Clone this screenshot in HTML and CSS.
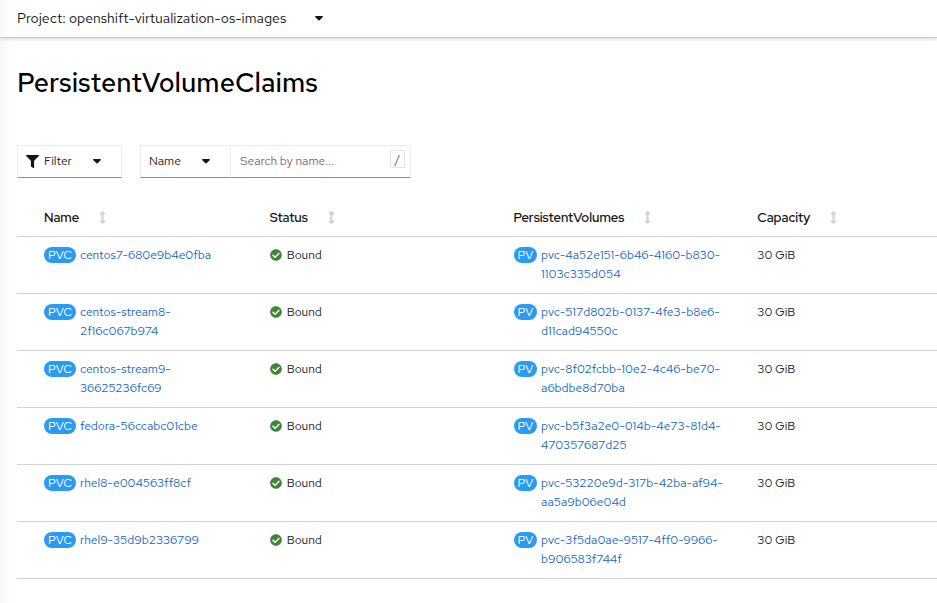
FILE: index.html
```
<!DOCTYPE html>
<html lang="en">
<head>
<meta charset="utf-8">
<title>PersistentVolumeClaims</title>
<link rel="stylesheet" href="styles.css">
</head>
<body>
<svg class="sprite" aria-hidden="true">
  <symbol id="caret" viewBox="0 0 10 6"><path d="M1.2 0h7.6c.8 0 1.1.9.6 1.4L5.7 5.2a1 1 0 0 1-1.4 0L.6 1.4C.1.9.4 0 1.2 0z"/></symbol>
  <symbol id="funnel" viewBox="0 0 512 512"><path d="M487.976 0H24.028C2.71 0-8.047 25.866 7.058 40.971L192 225.941V432c0 7.831 3.821 15.17 10.237 19.662l80 55.98C298.02 518.69 320 507.493 320 487.98V225.941l184.947-184.97C520.021 25.896 509.338 0 487.976 0z"/></symbol>
  <symbol id="sort" viewBox="0 0 256 512"><path d="M214.059 377.941H168V134.059h46.059c21.382 0 32.09-25.851 16.971-40.971L144.971 7.029c-9.373-9.373-24.568-9.373-33.941 0L24.971 93.088c-15.119 15.119-4.411 40.971 16.971 40.971H88v243.882H41.941c-21.382 0-32.09 25.851-16.971 40.971l86.059 86.059c9.373 9.373 24.568 9.373 33.941 0l86.059-86.059c15.12-15.119 4.412-40.971-16.97-40.971z"/></symbol>
  <symbol id="check" viewBox="0 0 512 512"><path d="M504 256c0 136.967-111.033 248-248 248S8 392.967 8 256 119.033 8 256 8s248 111.033 248 248zM227.314 387.314l184-184c6.248-6.248 6.248-16.379 0-22.627l-22.627-22.627c-6.248-6.249-16.379-6.249-22.628 0L216 308.118l-70.059-70.059c-6.248-6.248-16.379-6.248-22.628 0l-22.627 22.627c-6.248 6.248-6.248 16.379 0 22.627l104 104c6.249 6.249 16.379 6.249 22.628.001z"/></symbol>
</svg>
<header class="project-bar">
  <button class="project-toggle" type="button">Project: openshift-virtualization-os-images <svg class="caret"><use href="#caret"/></svg></button>
</header>
<main class="content">
  <h1 class="title">PersistentVolumeClaims</h1>
  <div class="toolbar">
    <button class="control filter" type="button"><svg class="funnel"><use href="#funnel"/></svg>Filter<svg class="caret"><use href="#caret"/></svg></button>
    <div class="search-group">
      <div class="control select-wrap">
        <select class="select" aria-label="Search attribute"><option>Name</option><option>Label</option></select>
        <svg class="caret"><use href="#caret"/></svg>
      </div>
      <div class="control search">
        <input class="search-input" type="text" placeholder="Search by name..." aria-label="Search by name">
        <kbd class="key">/</kbd>
      </div>
    </div>
  </div>
  <table class="table">
    <thead>
      <tr>
        <th class="col-name" scope="col"><button class="sort" type="button">Name<svg class="sort-icon"><use href="#sort"/></svg></button></th>
        <th class="col-status" scope="col"><button class="sort" type="button">Status<svg class="sort-icon"><use href="#sort"/></svg></button></th>
        <th class="col-volume" scope="col"><button class="sort" type="button">PersistentVolumes<svg class="sort-icon"><use href="#sort"/></svg></button></th>
        <th class="col-capacity" scope="col"><button class="sort" type="button">Capacity<svg class="sort-icon"><use href="#sort"/></svg></button></th>
      </tr>
    </thead>
    <tbody>
      <tr>
        <td><div class="resource"><span class="badge">PVC</span><a class="link" href="#">centos7-680e9b4e0fba</a></div></td>
        <td><div class="status"><svg class="check"><use href="#check"/></svg>Bound</div></td>
        <td><div class="resource"><span class="badge">PV</span><a class="link" href="#">pvc-4a52e151-6b46-4160-b830-<wbr>1103c335d054</a></div></td>
        <td>30 GiB</td>
      </tr>
      <tr>
        <td><div class="resource"><span class="badge">PVC</span><a class="link" href="#">centos-stream8-<wbr>2f16c067b974</a></div></td>
        <td><div class="status"><svg class="check"><use href="#check"/></svg>Bound</div></td>
        <td><div class="resource"><span class="badge">PV</span><a class="link" href="#">pvc-517d802b-0137-4fe3-b8e6-<wbr>d11cad94550c</a></div></td>
        <td>30 GiB</td>
      </tr>
      <tr>
        <td><div class="resource"><span class="badge">PVC</span><a class="link" href="#">centos-stream9-<wbr>36625236fc69</a></div></td>
        <td><div class="status"><svg class="check"><use href="#check"/></svg>Bound</div></td>
        <td><div class="resource"><span class="badge">PV</span><a class="link" href="#">pvc-8f02fcbb-10e2-4c46-be70-<wbr>a6bdbe8d70ba</a></div></td>
        <td>30 GiB</td>
      </tr>
      <tr>
        <td><div class="resource"><span class="badge">PVC</span><a class="link" href="#">fedora-56ccabc01cbe</a></div></td>
        <td><div class="status"><svg class="check"><use href="#check"/></svg>Bound</div></td>
        <td><div class="resource"><span class="badge">PV</span><a class="link" href="#">pvc-b5f3a2e0-014b-4e73-81d4-<wbr>470357687d25</a></div></td>
        <td>30 GiB</td>
      </tr>
      <tr>
        <td><div class="resource"><span class="badge">PVC</span><a class="link" href="#">rhel8-e004563ff8cf</a></div></td>
        <td><div class="status"><svg class="check"><use href="#check"/></svg>Bound</div></td>
        <td><div class="resource"><span class="badge">PV</span><a class="link" href="#">pvc-53220e9d-317b-42ba-af94-<wbr>aa5a9b06e04d</a></div></td>
        <td>30 GiB</td>
      </tr>
      <tr>
        <td><div class="resource"><span class="badge">PVC</span><a class="link" href="#">rhel9-35d9b2336799</a></div></td>
        <td><div class="status"><svg class="check"><use href="#check"/></svg>Bound</div></td>
        <td><div class="resource"><span class="badge">PV</span><a class="link" href="#">pvc-3f5da0ae-9517-4ff0-9966-<wbr>b906583f744f</a></div></td>
        <td>30 GiB</td>
      </tr>
    </tbody>
  </table>
</main>
</body>
</html>
```
FILE: styles.css
```
* { box-sizing: border-box; }
body {
  margin: 0;
  min-height: 100vh;
  background: linear-gradient(to right, #f7f7f7, #fff 10px);
  color: #222;
  font: 12px/19px "Red Hat Text", Inter, sans-serif;
}
button, select, input, kbd { font: inherit; color: inherit; }
button { border: 0; padding: 0; background: none; cursor: pointer; }
svg { flex: none; fill: currentColor; }
.sprite { position: absolute; width: 0; height: 0; }
.caret { width: 10px; height: 5px; color: #151515; }
.project-bar {
  display: flex;
  height: 38px;
  padding: 0 17px;
  border-bottom: 1px solid #c9c9c9;
  box-shadow: 0 1px 4px rgba(0, 0, 0, 0.16);
}
.project-toggle {
  display: flex;
  align-items: center;
  gap: 28px;
  color: #151515;
  font-size: 14px;
}
.content { padding: 27px 0 24px 17px; }
.title {
  margin: 0;
  color: #000;
  font: 500 27px/36px "Red Hat Text", Inter, sans-serif;
}
.toolbar { display: flex; gap: 18px; margin-top: 44px; }
.control {
  display: flex;
  align-items: center;
  height: 33px;
  border: 1px solid #ececec;
  border-bottom-color: #8a8d90;
  background: #fff;
}
.filter { width: 105px; padding: 0 8px; }
.funnel { width: 13px; height: 13px; margin-right: 5px; color: #151515; }
.filter .caret { margin-left: 20px; }
.search-group { display: flex; }
.select-wrap { width: 90px; padding: 0 19px 0 8px; border-right: 0; }
.select {
  flex: 1;
  min-width: 0;
  padding: 0;
  border: 0;
  appearance: none;
  background: none;
}
.search { width: 181px; padding: 0 5px 0 9px; }
.search-input { flex: 1; min-width: 0; padding: 0; border: 0; background: none; }
.search-input::placeholder { color: #6a6e73; opacity: 1; }
.key {
  width: 15px;
  height: 18px;
  margin-bottom: 5px;
  border: 1px solid #e4e4e4;
  border-radius: 2px;
  color: #555;
  line-height: 16px;
  text-align: center;
}
.table {
  width: 100%;
  margin-top: 20px;
  border-collapse: separate;
  border-spacing: 0;
  table-layout: fixed;
}
th, td {
  padding: 9px 8px;
  border-bottom: 1px solid #d2d2d2;
  text-align: left;
  vertical-align: top;
}
th:first-child, td:first-child { padding-right: 24px; padding-left: 27px; }
th {
  padding-top: 10px;
  color: #151515;
  font-family: "Red Hat Display", Inter, sans-serif;
  font-size: 13px;
  font-weight: 600;
}
td { height: 57px; }
.col-name { width: 26.6%; }
.col-status, .col-volume { width: 26.5%; }
.sort { display: flex; align-items: center; gap: 20px; }
.sort-icon { width: 7px; height: 13px; color: #d2d2d2; }
.resource { display: flex; align-items: flex-start; gap: 4px; }
.badge {
  flex: none;
  height: 16px;
  margin-top: 1px;
  padding: 0 4px;
  border-radius: 8px;
  background: #2b9af3;
  color: #fff;
  line-height: 16px;
}
.link { color: #1266c8; text-decoration: none; }
.status { display: flex; align-items: center; gap: 5px; }
.check { width: 12px; height: 12px; margin-bottom: 2px; color: #3e8635; }
```
